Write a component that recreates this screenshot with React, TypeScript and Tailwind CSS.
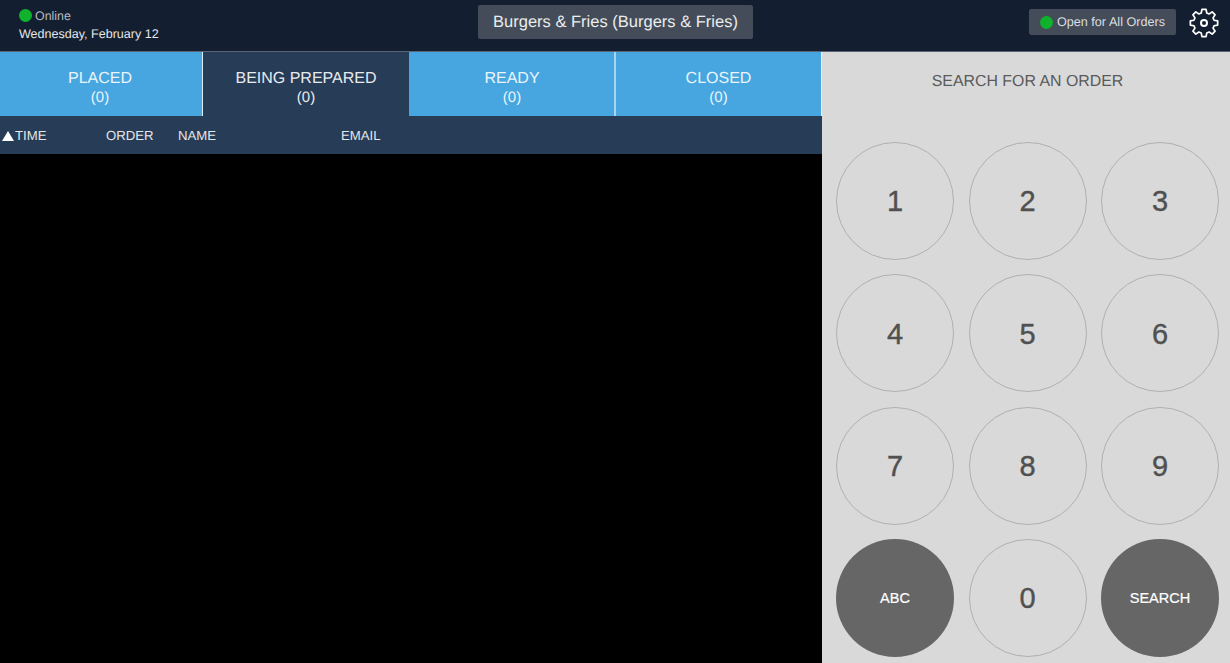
const tabs = [
  { label: "PLACED", width: "w-[203px]", edge: "border-r border-[#dcecf7] pr-[2px]" },
  { label: "BEING PREPARED", width: "w-[206px]", active: true, edge: "" },
  { label: "READY", width: "w-[207px]", edge: "border-r-2 border-[#a9d5f0] pl-[1px]" },
  { label: "CLOSED", width: "w-[205px]", edge: "" },
];

const keys = ["1", "2", "3", "4", "5", "6", "7", "8", "9"];

// Eight-tooth cog outline for the settings button, centred on (15,15)
function cogPath() {
  const points: string[] = [];
  for (let k = 0; k < 8; k++) {
    const mid = (k * Math.PI) / 4 - Math.PI / 2;
    const corners: [number, number][] = [
      [10.4, -0.27],
      [13.8, -0.15],
      [13.8, 0.15],
      [10.4, 0.27],
    ];
    for (const [r, offset] of corners) {
      const x = 15 + r * Math.cos(mid + offset);
      const y = 15 + r * Math.sin(mid + offset);
      points.push(`${x.toFixed(2)} ${y.toFixed(2)}`);
    }
  }
  return `M${points.join("L")}Z`;
}

function Key({ label, dark }: { label: string; dark?: boolean }) {
  return dark ? (
    <button className="flex size-[118px] items-center justify-center rounded-full bg-[#666666] pt-[1px] text-[14.5px] text-white [-webkit-text-stroke:0.2px_#ffffff]">
      {label}
    </button>
  ) : (
    <button className="flex size-[118px] items-center justify-center rounded-full border border-[#b0b0b0] pt-[2px] text-[29px] text-[#505050] [-webkit-text-stroke:0.4px_#505050]">
      {label}
    </button>
  );
}

export default function App() {
  return (
    <div className="flex h-[663px] w-[1230px] flex-col overflow-hidden bg-black font-['Liberation_Sans',Arial,sans-serif] [text-rendering:geometricPrecision]">
      {/* top bar */}
      <header className="relative flex h-[51px] shrink-0 items-start justify-between bg-[#131f30] pl-[19px] pr-[11px]">
        <div className="flex flex-col pt-[6px]">
          <span className="flex h-[18px] items-center text-[12.4px] text-[#b5bac1]">
            <span className="mr-[3px] size-[13px] rounded-full bg-[#10b22d]" />
            <span className="pt-[2px]">Online</span>
          </span>
          <span className="pt-[1px] text-[12.55px] leading-[18px] text-[#e4e6e8]">
            Wednesday, February 12
          </span>
        </div>

        <div className="absolute left-[478px] top-[5px] flex h-[34px] w-[275px] items-center justify-center rounded-[2px] bg-[#434c58] pt-[1px] text-[16.5px] text-[#ebecee]">
          Burgers &amp; Fries (Burgers &amp; Fries)
        </div>

        <div className="flex items-start gap-[13px] pt-[8px]">
          <div className="mt-[1px] flex h-[26px] w-[147px] items-center justify-center rounded-[2px] bg-[#434c58] text-[12.65px] text-[#dcdee1]">
            <span className="mr-[4px] size-[13px] rounded-full bg-[#10b22d]" />
            <span className="pt-[1px]">Open for All Orders</span>
          </div>
          <svg viewBox="0 0 30 30" className="size-[30px]" fill="none" stroke="#ffffff" strokeWidth="1.7" strokeLinejoin="round">
            <path d={cogPath()} />
            <circle cx="15" cy="15" r="3" strokeWidth="2" />
          </svg>
        </div>
      </header>

      <div className="flex min-h-0 flex-1 border-t border-[#5c6673]">
        <div className="flex w-[822px] shrink-0 flex-col">
          {/* status tabs */}
          <div className="flex h-[64px] shrink-0 border-r border-[#e8eef2]">
            {tabs.map((tab) => (
              <div
                key={tab.label}
                className={`flex flex-col items-center justify-center pt-[8px] text-[16px] leading-[19px] ${tab.width} ${
                  tab.active ? "bg-[#273c56] text-[#e8ebee]" : "bg-[#47a6e0] text-[#e9f4fb]"
                } ${tab.edge}`}
              >
                <span>{tab.label}</span>
                <span className="text-[15px]">(0)</span>
              </div>
            ))}
          </div>

          {/* table head */}
          <div className="flex h-[38px] shrink-0 items-center bg-[#273c56] pt-[2px] text-[13.2px] text-[#e4e7ea]">
            <span className="ml-[2px] mr-[1px] h-0 w-0 border-x-[6px] border-b-[10px] border-x-transparent border-b-white" />
            <span className="w-[91px]">TIME</span>
            <span className="w-[72px]">ORDER</span>
            <span className="w-[163px]">NAME</span>
            <span>EMAIL</span>
          </div>

          <div className="flex-1 bg-black" />
        </div>

        {/* keypad */}
        <aside className="flex flex-1 flex-col bg-[#d9d9d9] px-[14px]">
          <div className="pt-[19px] text-center text-[15.9px] leading-[21px] text-[#5a5a5a]">
            SEARCH FOR AN ORDER
          </div>
          <div className="mt-[50px] grid grid-cols-[118px_118px_118px] gap-x-[14.5px] gap-y-[14.33px]">
            {keys.map((k) => (
              <Key key={k} label={k} />
            ))}
            <Key label="ABC" dark />
            <Key label="0" />
            <Key label="SEARCH" dark />
          </div>
        </aside>
      </div>
    </div>
  );
}
